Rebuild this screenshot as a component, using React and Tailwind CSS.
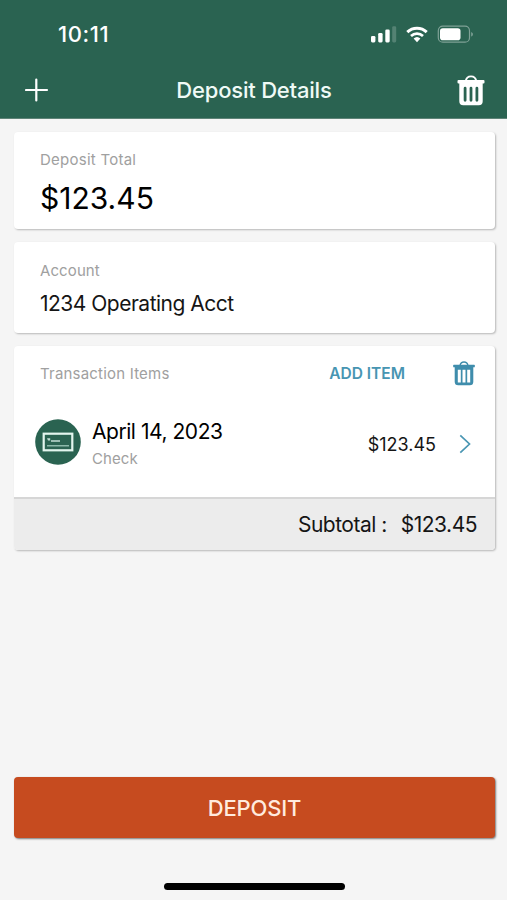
function HeaderTrashIcon({ className }) {
  return (
    <svg viewBox="0 0 28 31" className={className} fill="none">
      <path d="M8.600 6.500C9.200 3 11.300 1.400 14 1.400s4.800 1.600 5.400 5.100" stroke="currentColor" strokeWidth="1.900" />
      <rect x="0.500" y="5" width="27" height="3.600" rx="1" fill="currentColor" />
      <path
        fillRule="evenodd"
        fill="currentColor"
        d="M2.300 8h23.400v18.300a4 4 0 0 1-4 4H6.300a4 4 0 0 1-4-4zM8.100 11.800a1.400 1.400 0 0 0-1.400 1.400v12.100a1.400 1.400 0 0 0 2.800 0V13.200a1.400 1.400 0 0 0-1.400-1.400zM14 11.800a1.400 1.400 0 0 0-1.400 1.400v12.100a1.400 1.400 0 0 0 2.800 0V13.200a1.400 1.400 0 0 0-1.400-1.400zM19.900 11.800a1.400 1.400 0 0 0-1.400 1.400v12.100a1.400 1.400 0 0 0 2.800 0V13.200a1.400 1.400 0 0 0-1.400-1.400z"
      />
    </svg>
  );
}

function CardTrashIcon({ className }) {
  return (
    <svg viewBox="0 0 22 25" className={className} fill="none">
      <path d="M7 4.500C7.500 2 9 1 11 1s3.500 1 4 3.500" stroke="currentColor" strokeWidth="1.300" />
      <rect x="0.200" y="3.700" width="21.600" height="2.600" rx="0.600" fill="currentColor" />
      <path
        fillRule="evenodd"
        fill="currentColor"
        d="M1.700 6h18.600v14.700a3.500 3.500 0 0 1-3.500 3.500H5.200a3.500 3.500 0 0 1-3.500-3.500zM4.800 8.800v12.700h3V8.800zM9.500 8.800v12.700h3V8.800zM14.200 8.800v12.700h3V8.800z"
      />
    </svg>
  );
}

function StatusBar() {
  return (
    <div className="flex h-[62px] items-start justify-between pl-[58px] pr-[33px] text-white">
      <span className="mt-[21px] text-[22px] leading-[26px] font-medium tracking-[0.6px]">10:11</span>
      <svg viewBox="0 0 104 20" className="mt-[24px] h-[20px] w-[104px]" fill="none">
        <rect x="1" y="12" width="4.400" height="6.400" rx="1.300" fill="white" />
        <rect x="8.200" y="9" width="4.400" height="9.400" rx="1.300" fill="white" />
        <rect x="15.300" y="5.500" width="4.400" height="12.900" rx="1.300" fill="white" />
        <rect x="22.200" y="2.300" width="4" height="16.100" rx="1.300" fill="white" fillOpacity="0.200" />
        <path d="M37.300 8.100a14 14 0 0 1 19.400 0" stroke="white" strokeWidth="3" />
        <path d="M41 12a8.700 8.700 0 0 1 12 0" stroke="white" strokeWidth="2.700" />
        <path d="M43.600 14.600a5 5 0 0 1 6.800 0L47 18.200z" fill="white" />
        <rect x="68.300" y="2.200" width="31.200" height="16" rx="4.500" stroke="white" strokeOpacity="0.400" strokeWidth="1.200" />
        <rect x="70" y="4.200" width="20.500" height="12" rx="2.800" fill="white" />
        <path d="M101.200 8v4.600c1-.4 1.700-1.300 1.700-2.300s-.7-1.900-1.700-2.300z" fill="white" fillOpacity="0.400" />
      </svg>
    </div>
  );
}

function TitleBar() {
  return (
    <div className="flex h-[56px] items-center justify-between pl-[25px] pr-[22px] text-white">
      <svg viewBox="0 0 24 24" className="h-6 w-6" fill="none" stroke="currentColor" strokeWidth="2.200" strokeLinecap="round">
        <path d="M11.300 1.500v21M1 12h21" />
      </svg>
      <h1 className="pl-[2px] text-[22px] leading-[28px] font-medium tracking-[-0.2px] text-[#effaf6]">Deposit Details</h1>
      <HeaderTrashIcon className="h-[31px] w-[28px]" />
    </div>
  );
}

const card = "rounded-[4px] bg-white shadow-[1px_1px_2px_rgba(0,0,0,0.25)]";
const label = "text-[15px] leading-[20px] text-[#a0a0a0]";

export default function App() {
  return (
    <div className="flex h-[900px] w-[507px] flex-col overflow-hidden bg-[#f5f5f5] font-['Inter','Liberation_Sans',sans-serif] whitespace-nowrap text-[#151515]">
      <header className="h-[119px] shrink-0 border-b border-[#5e8377] bg-[#2a6351]">
        <StatusBar />
        <TitleBar />
      </header>

      <main className="flex flex-1 flex-col gap-[13px] pt-[13px] pr-[12px] pl-[14px]">
        <section className={`${card} h-[97px] pt-[18px] pl-[26px]`}>
          <div className={`${label} tracking-[0.25px]`}>Deposit Total</div>
          <div className="mt-[9px] text-[30px] leading-[38px] text-black">$123.45</div>
        </section>

        <section className={`${card} h-[91px] pt-[19px] pl-[26px]`}>
          <div className={`${label} tracking-[0.1px]`}>Account</div>
          <div className="mt-[9px] text-[21px] leading-[28px] tracking-[-0.5px]">1234 Operating Acct</div>
        </section>

        <section className={`${card} flex h-[204px] flex-col overflow-hidden`}>
          <div className="flex h-[55px] items-center pr-[20px] pl-[26px]">
            <span className={`${label} tracking-[0.2px]`}>Transaction Items</span>
            <span className="ml-auto text-[15.5px] leading-[20px] font-semibold text-[#4795b2]">ADD ITEM</span>
            <CardTrashIcon className="ml-[48px] h-[25px] w-[22px] text-[#3f8dac]" />
          </div>
          <div className="flex h-[96px] items-start pr-[24px] pl-[21px]">
            <svg viewBox="0 0 46 46" className="mt-[18px] h-[46px] w-[46px]" fill="none">
              <circle cx="23" cy="23" r="22.800" fill="#2a6351" />
              <rect x="8.700" y="14.700" width="28.600" height="16.600" stroke="#e3f5ee" strokeWidth="2.200" />
              <path d="M12 19.200h3.200v2.400H13zM16 21.300h9v1.500h-9z" fill="#c1ddd3" />
              <path d="M12 26.800h22" stroke="#8bb8a9" strokeWidth="1.500" />
            </svg>
            <div className="ml-[11px] pt-[17px]">
              <div className="text-[21px] leading-[28px] tracking-[-0.45px] text-black">April 14, 2023</div>
              <div className={`${label} mt-[3px] tracking-[0.1px]`}>Check</div>
            </div>
            <span className="mt-[32px] ml-auto text-[18px] leading-[24px]">$123.45</span>
            <svg viewBox="0 0 12 20" className="mt-[33px] ml-[23px] h-[20px] w-[12px]" fill="none">
              <path d="M1.300 1.300 10.500 10 1.300 18.700" stroke="#4a96b3" strokeWidth="1.700" />
            </svg>
          </div>
          <div className="flex flex-1 items-center justify-end gap-[14px] border-t-2 border-[#d6d6d6] bg-[#ececec] pt-[1px] pr-[18px] text-[21px] leading-[28px] tracking-[-0.5px]">
            <span>Subtotal :</span>
            <span>$123.45</span>
          </div>
        </section>

        <button className="mt-auto h-[61px] shrink-0 rounded-[4px] bg-[#c64b1f] pt-[1px] text-[22px] font-medium tracking-[-0.2px] text-[#ffeade] shadow-[1px_1px_2px_rgba(0,0,0,0.5)]">
          DEPOSIT
        </button>
        <div className="flex h-[49px] shrink-0 justify-center pt-[32px]">
          <div className="h-[7px] w-[181px] rounded-full bg-black" />
        </div>
      </main>
    </div>
  );
}
